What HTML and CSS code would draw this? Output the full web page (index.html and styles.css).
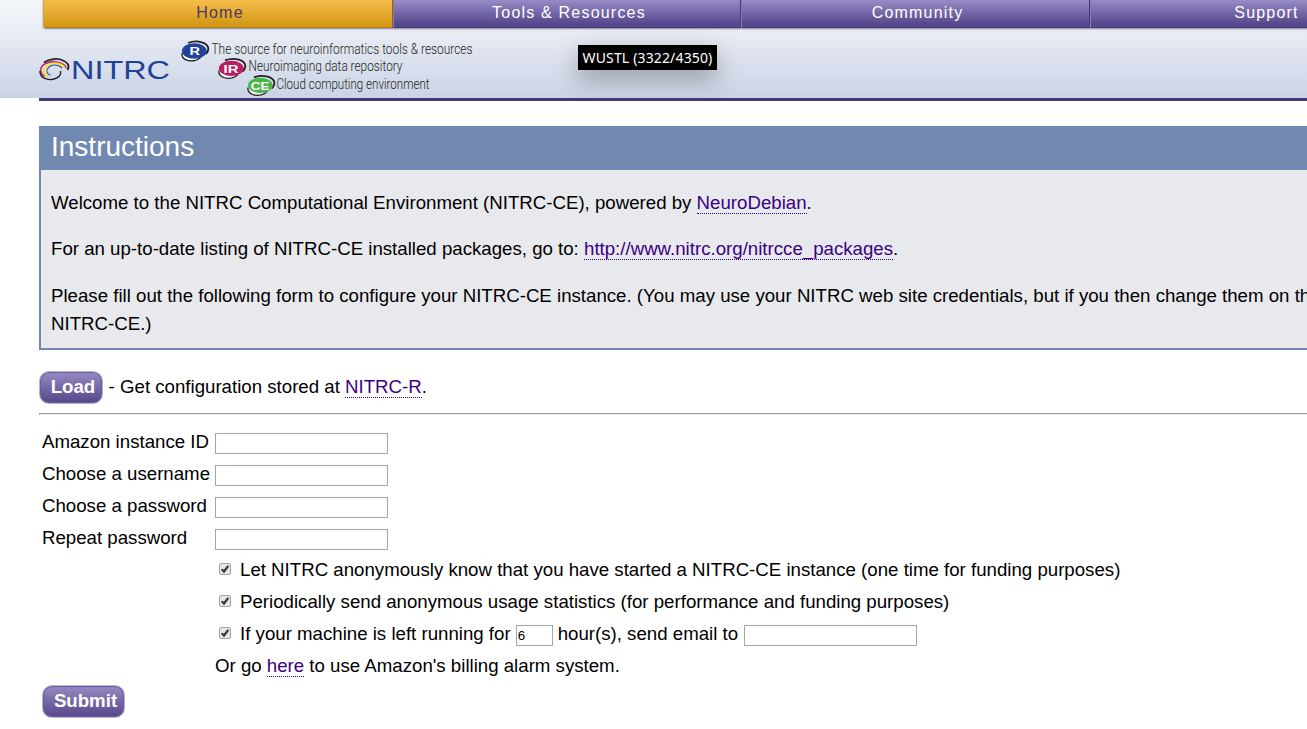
FILE: index.html
```
<!DOCTYPE html>
<html lang="en">
<head>
<meta charset="utf-8">
<title>NITRC-CE</title>
<link rel="stylesheet" href="styles.css">
</head>
<body>
<header class="header">
  <nav class="nav">
    <a class="tab active">Home</a><a class="tab tools">Tools &amp; Resources</a><a class="tab">Community</a><a class="tab">Support</a>
  </nav>
  <svg class="brand" width="440" height="60" viewBox="38 38 440 60">
    <g fill="none">
      <path d="M44 62.500 C49 58.500 58 58 63 60.500 C68 62.500 70 66 67.500 70" stroke="#231f20" stroke-width="1.700"/>
      <path d="M66.500 68 C63 61.500 52 60 45.500 63.500 C39 67 39.500 73 44.500 76.500" stroke="#c02872" stroke-width="1.600"/>
      <path d="M65 68 C61 62.500 52 62 47.500 65.500 C42.500 69 43 73 47.500 76.500" stroke="#f4e51f" stroke-width="1.600"/>
      <path d="M62 68 C58 64 52 64.500 49 67 C45.500 70 46.500 73.500 50.500 75.500" stroke="#2850a0" stroke-width="1.100"/>
      <path d="M39.800 71 C40 78 47 80.500 53 79.300 C58.500 78 61.500 75 60.500 71" stroke="#231f20" stroke-width="1.400"/>
    </g>
    <text class="wordmark" x="71" y="79" textLength="99" lengthAdjust="spacingAndGlyphs">NITRC</text>
    <g>
      <ellipse cx="192.500" cy="53" rx="11" ry="8" fill="#fff"/>
      <path d="M188 43 C197 39.500 209 42.500 208.300 49.500 C208 51.500 207 53 205.500 54" class="swirl"/>
      <path d="M182 53 C181 59 188 62 195 60.500 C199 59.300 201 57.500 201 56" class="swirl thin"/>
      <ellipse cx="194.300" cy="51" rx="12.400" ry="7.700" fill="#214298"/>
      <text class="badge" x="189.500" y="55.200" textLength="10.500" lengthAdjust="spacingAndGlyphs">R</text>
    </g>
    <g transform="translate(37 17.400)">
      <ellipse cx="192.500" cy="53" rx="11" ry="8" fill="#fff"/>
      <path d="M188 43 C197 39.500 209 42.500 208.300 49.500 C208 51.500 207 53 205.500 54" class="swirl"/>
      <path d="M182 53 C181 59 188 62 195 60.500 C199 59.300 201 57.500 201 56" class="swirl thin"/>
      <ellipse cx="194.300" cy="51" rx="12.400" ry="7.700" fill="#b81f62"/>
      <text class="badge" x="186.500" y="55.200" textLength="15" lengthAdjust="spacingAndGlyphs">IR</text>
    </g>
    <g transform="translate(66 34.400)">
      <ellipse cx="192.500" cy="53" rx="11" ry="8" fill="#fff"/>
      <path d="M188 43 C197 39.500 209 42.500 208.300 49.500 C208 51.500 207 53 205.500 54" class="swirl"/>
      <path d="M182 53 C181 59 188 62 195 60.500 C199 59.300 201 57.500 201 56" class="swirl thin"/>
      <ellipse cx="194.300" cy="51" rx="12.400" ry="7.700" fill="#4bb648"/>
      <text class="badge" x="184.800" y="55.200" textLength="18.500" lengthAdjust="spacingAndGlyphs">CE</text>
    </g>
    <g class="tagline">
      <text x="211.500" y="54" textLength="261" lengthAdjust="spacingAndGlyphs">The source for neuroinformatics tools &amp; resources</text>
      <text x="248.500" y="71.300" textLength="154" lengthAdjust="spacingAndGlyphs">Neuroimaging data repository</text>
      <text x="276.500" y="88.500" textLength="153" lengthAdjust="spacingAndGlyphs">Cloud computing environment</text>
    </g>
  </svg>
  <div class="tooltip">WUSTL (3322/4350)</div>
</header>

<main class="content">
  <section class="panel">
    <h1 class="panel-title">Instructions</h1>
    <div class="panel-body">
      <p>Welcome to the NITRC Computational Environment (NITRC-CE), powered by <a class="link">NeuroDebian</a>.</p>
      <p>For an up-to-date listing of NITRC-CE installed packages, go to: <a class="link">http://www.nitrc.org/nitrcce_packages</a>.</p>
      <p>Please fill out the following form to configure your NITRC-CE instance. (You may use your NITRC web site credentials, but if you then change them on the<br>NITRC-CE.)</p>
    </div>
  </section>
  <div class="load-row"><button class="button load">Load</button><span>- Get configuration stored at <a class="link">NITRC-R</a>.</span></div>
  <hr class="rule">
  <form class="form">
    <label for="instance">Amazon instance ID</label><input class="field" id="instance">
    <label for="user">Choose a username</label><input class="field" id="user">
    <label for="pass">Choose a password</label><input class="field" id="pass" type="password">
    <label for="repeat">Repeat password</label><input class="field" id="repeat" type="password">
    <div class="option"><svg class="check" viewBox="0 0 12 12"><rect class="box" x=".5" y=".5" width="11" height="11" rx="1.500"/><path d="M2.700 6.200 5 8.500 9.300 2.800"/></svg><span>Let NITRC anonymously know that you have started a NITRC-CE instance (one time for funding purposes)</span></div>
    <div class="option"><svg class="check" viewBox="0 0 12 12"><rect class="box" x=".5" y=".5" width="11" height="11" rx="1.500"/><path d="M2.700 6.200 5 8.500 9.300 2.800"/></svg><span>Periodically send anonymous usage statistics (for performance and funding purposes)</span></div>
    <div class="option"><svg class="check" viewBox="0 0 12 12"><rect class="box" x=".5" y=".5" width="11" height="11" rx="1.500"/><path d="M2.700 6.200 5 8.500 9.300 2.800"/></svg><span>If your machine is left running for</span><input class="field hours" value="6"><span>hour(s), send email to</span><input class="field"></div>
    <div class="option"><span>Or go <a class="link">here</a> to use Amazon's billing alarm system.</span></div>
  </form>
  <button class="button submit">Submit</button>
</main>
</body>
</html>
```
FILE: styles.css
```
* { box-sizing: border-box; }
html { overflow: hidden; }
body {
  margin: 0;
  width: 1480px;
  height: 729px;
  overflow: hidden;
  background: #fff;
  color: #000;
  font: 18.67px/28px "Liberation Sans", Arial, sans-serif;
}
.header {
  position: relative;
  height: 98px;
  background: linear-gradient(#f5f7fa, #e7ebf4 35%, #cad3e5);
}
.nav {
  display: flex;
  width: 1396px;
  height: 28px;
  margin-left: 43px;
  border-radius: 0 0 3px 3px;
  overflow: hidden;
  box-shadow: 0 1px 2px #8c83a0;
}
.tab {
  flex: 0 0 349px;
  height: 28px;
  padding-left: 4px;
  background: linear-gradient(#988bc6, #54468a 88%, #594b8f 95%, #403374 96%);
  box-shadow: inset 1px 0 #877bb2, inset -1px 0 #463879;
  color: #fff;
  font-size: 16px;
  line-height: 25px;
  letter-spacing: 1.2px;
  text-align: center;
}
.tab.active {
  flex-basis: 350px;
  background: linear-gradient(#f5bd4b, #d59817 88%, #d59817 95%, #b07b14 96%);
  box-shadow: inset 1px 0 #d7a33c, inset -1px 0 #8b6424;
  color: #4a3768;
}
.tab.tools { flex-basis: 348px; }
.brand { display: block; margin: 10px 0 0 38px; }
.wordmark { font: 26px "Liberation Sans", Arial, sans-serif; fill: #214298; }
.badge { font: bold 11.5px "Liberation Sans", Arial, sans-serif; fill: #fff; }
.tagline { font: 300 14px Roboto, Arial, sans-serif; fill: #231f20; }
.swirl { fill: none; stroke: #231f20; stroke-width: 1.8; }
.thin { stroke-width: 1.3; }
.tooltip {
  position: absolute;
  left: 578px;
  top: 45px;
  width: 139px;
  height: 25px;
  background: #000;
  box-shadow: 0 9px 24px rgba(0, 0, 0, .3);
  color: #fff;
  font: 14px/26px "Noto Sans", sans-serif;
  letter-spacing: .15px;
  text-align: center;
  white-space: nowrap;
}
.content { margin-left: 39px; border-top: 3px solid #46377b; padding-top: 25px; }
.panel { height: 224px; border: 2px solid #7188b0; background: #e8e9ed; }
.panel-title {
  height: 42px;
  margin: 0;
  padding-left: 10px;
  background: #7188b0;
  color: #fff;
  font-size: 28px;
  font-weight: 400;
  line-height: 38px;
}
.panel-body { padding: 19px 10px 0; white-space: nowrap; }
.panel-body p { margin: 0 0 18px; }
.panel-body p:nth-child(2) { margin-bottom: 19px; }
.link { color: #3b0083; border-bottom: 1px dotted #3b0083; }
.load-row { display: flex; gap: 5.6px; height: 63px; padding-top: 21px; line-height: 32px; }
.button {
  display: block;
  height: 33px;
  padding: 0 0 2px 4px;
  border: 1px solid #b9b5c8;
  border-radius: 10px;
  background: linear-gradient(#978ac4, #554789);
  box-shadow: inset 0 0 1px 1px #6b5d9d;
  color: #fff;
  font: bold 18.67px/28px "Liberation Sans", Arial, sans-serif;
}
.load { width: 64px; }
.submit { width: 83px; margin: 1px 0 0 3px; }
.rule { height: 2px; margin: 0 0 13px; border: 1px solid; border-color: #9a9a9a #eee #eee #9a9a9a; }
.form {
  display: grid;
  grid-template-columns: 173px 1fr;
  grid-auto-rows: 32px;
  padding-left: 3px;
  line-height: 28px;
  white-space: nowrap;
}
.field {
  width: 173px;
  height: 21px;
  margin: 5px 0 0;
  padding: 1px;
  border: 1px solid #a6a6a6;
  background: #fff;
  font: 13.33px "Liberation Sans", Arial, sans-serif;
}
.hours { width: 37px; margin: 5px 5px 0; }
.option { grid-column: 2; display: flex; }
.option .field:last-child { margin-left: 6px; }
.check { width: 12px; height: 12px; margin: 7px 9px 0 4px; }
.check path { fill: none; stroke: #383838; stroke-width: 2.2; }
.box { fill: #e6e6e6; stroke: #a5a5a5; }
```
